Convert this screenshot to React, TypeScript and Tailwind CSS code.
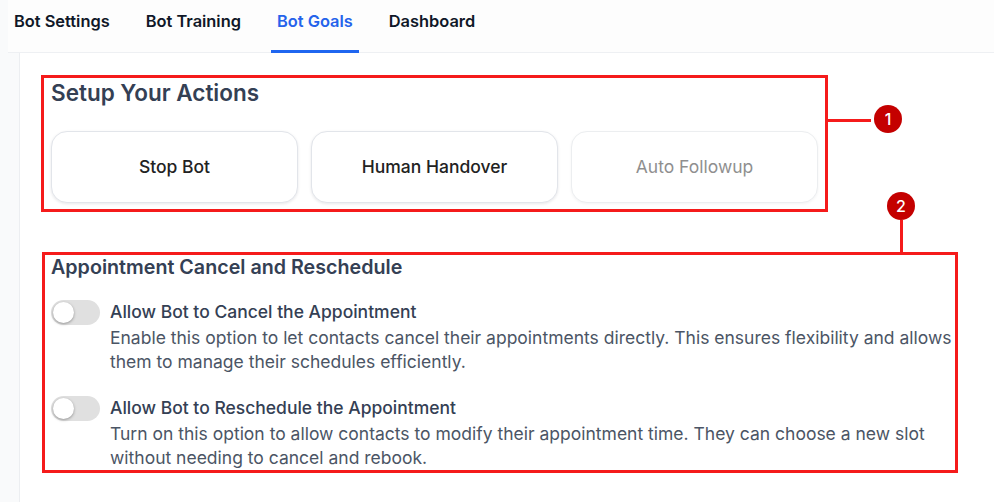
import { useState } from 'react';

const tabs = ['Bot Settings', 'Bot Training', 'Bot Goals', 'Dashboard'];

const actions = [
  { label: 'Stop Bot', disabled: false },
  { label: 'Human Handover', disabled: false },
  { label: 'Auto Followup', disabled: true },
];

const options = [
  {
    id: 'cancel',
    title: 'Allow Bot to Cancel the Appointment',
    desc: 'Enable this option to let contacts cancel their appointments directly. This ensures flexibility and allows them to manage their schedules efficiently.',
  },
  {
    id: 'reschedule',
    title: 'Allow Bot to Reschedule the Appointment',
    desc: 'Turn on this option to allow contacts to modify their appointment time. They can choose a new slot without needing to cancel and rebook.',
  },
];

const Toggle = ({ on, onChange }: { on: boolean; onChange: () => void }) => (
  <button
    onClick={onChange}
    className={`relative shrink-0 w-[49px] h-[25px] rounded-full transition-colors ${on ? 'bg-[#2563eb]' : 'bg-[#e0e0e0]'}`}
  >
    <span
      className={`absolute top-[2px] w-[21px] h-[21px] rounded-full bg-white shadow-[0_1px_3px_rgba(0,0,0,0.35)] transition-all ${on ? 'left-[26px]' : 'left-[2px]'}`}
    />
  </button>
);

const Badge = ({ n }: { n: number }) => (
  <div className="w-[28px] h-[28px] rounded-full bg-[#c40000] flex items-center justify-center text-white text-[16px] font-medium leading-none">
    {n}
  </div>
);

export default function App() {
  const [active, setActive] = useState('Bot Goals');
  const [toggles, setToggles] = useState<Record<string, boolean>>({ cancel: false, reschedule: false });

  return (
    <div className="w-[994px] h-[502px] overflow-hidden bg-[#f9fafb] font-['Inter',sans-serif] flex flex-col">
      <nav className="ml-[8px] h-[53px] shrink-0 flex gap-[24px] border-b border-[#eef0f3] bg-[#fdfdfd]">
        {tabs.map(t => (
          <button
            key={t}
            onClick={() => setActive(t)}
            className={`px-[6px] pt-[9px] h-[53px] flex flex-col justify-between text-[16.4px] leading-6 font-semibold ${active === t ? 'text-[#2563eb]' : 'text-[#101828]'}`}
          >
            <span>{t}</span>
            <span className={`block h-[3px] -mx-[6px] ${active === t ? 'bg-[#1f66f0]' : 'bg-transparent'}`} />
          </button>
        ))}
      </nav>

      <div className="ml-[19px] flex-1 border-l border-[#eceef1] bg-white pl-[21px] pt-[22px]">
        <div className="relative w-[787px] border-[3px] border-[#f51b1b] pl-[7px] pr-[4px] pt-[1px] pb-[6px]">
          <h2 className="text-[22.5px] leading-7 font-semibold text-[#344054]">Setup Your Actions</h2>
          <div className="mt-[24px] flex gap-[13px]">
            {actions.map(a => (
              <button
                key={a.label}
                className={`w-[247px] h-[72px] rounded-2xl border bg-white text-[17.5px] ${a.disabled ? 'border-[#eceef0] text-[#8f8f8f] shadow-[0_1px_3px_rgba(16,24,40,0.05)]' : 'border-[#e2e5ea] text-[#222] font-medium shadow-[0_1px_3px_rgba(16,24,40,0.1)]'}`}
              >
                {a.label}
              </button>
            ))}
          </div>
          <div className="absolute left-full top-[41px] w-[46px] h-[3px] bg-[#f51b1b]" />
          <div className="absolute left-[830px] top-[27px]">
            <Badge n={1} />
          </div>
        </div>

        <div className="relative mt-[40px] ml-[1px] w-[916px] border-[3px] border-[#f51b1b] pl-[6px]">
          <h2 className="text-[19.7px] leading-6 font-semibold text-[#344054]">Appointment Cancel and Reschedule</h2>
          <div className="mt-[21px] flex flex-col gap-[22px]">
            {options.map(o => (
              <div key={o.id} className="flex gap-[10px]">
                <Toggle on={toggles[o.id]} onChange={() => setToggles(p => ({ ...p, [o.id]: !p[o.id] }))} />
                <div className="flex-1">
                  <div className="text-[17.5px] leading-6 font-medium text-[#344054]">{o.title}</div>
                  <p className="mt-[2px] text-[17.5px] leading-6 text-[#4b5565]">{o.desc}</p>
                </div>
              </div>
            ))}
          </div>
          <div className="absolute left-[855px] -top-[35px] w-[3px] h-[32px] bg-[#f51b1b]" />
          <div className="absolute left-[842px] -top-[63px]">
            <Badge n={2} />
          </div>
        </div>
      </div>
    </div>
  );
}
